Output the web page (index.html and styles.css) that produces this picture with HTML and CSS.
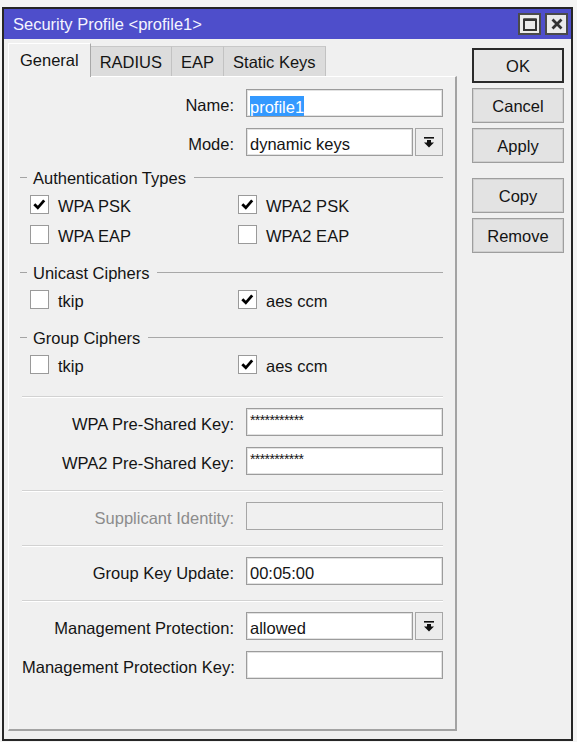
FILE: index.html
```html
<!DOCTYPE html>
<html>
<head>
<meta charset="utf-8">
<link rel="stylesheet" href="styles.css">
</head>
<body>
<div class="window">
  <div class="titlebar">
    <span class="title">Security Profile &lt;profile1&gt;</span>
    <div class="tb-btns">
      <span class="tb-btn"><svg width="14" height="13" viewBox="0 0 14 13"><rect x="1" y="1.5" width="12" height="10.5" fill="none" stroke="#333" stroke-width="2"/><rect x="1" y="0.5" width="12" height="2.5" fill="#333"/></svg></span>
      <span class="tb-btn"><svg width="12" height="12" viewBox="0 0 12 12"><path d="M1.5 1.5 L10.5 10.5 M10.5 1.5 L1.5 10.5" stroke="#333" stroke-width="2.8" fill="none"/></svg></span>
    </div>
  </div>
  <div class="body">
    <div class="left">
      <div class="tabs">
        <div class="tab active">General</div>
        <div class="tab">RADIUS</div>
        <div class="tab">EAP</div>
        <div class="tab">Static Keys</div>
      </div>
      <div class="panel">
        <div class="row">
          <span class="lbl">Name:</span>
          <span class="field"><span class="sel">profile1</span></span>
        </div>
        <div class="row gap">
          <span class="lbl">Mode:</span>
          <span class="field">dynamic keys</span>
          <span class="dd"><svg width="10" height="11" viewBox="0 0 10 11"><rect x="0" y="0" width="10" height="1.6" fill="#111"/><rect x="3" y="3" width="4" height="3" fill="#111"/><polygon points="0,5.5 10,5.5 5,10.5" fill="#111"/></svg></span>
        </div>

        <div class="group"><span class="t">Authentication Types</span></div>
        <div class="checks">
          <label class="cb"><span class="box"><svg width="17" height="17" viewBox="0 0 17 17"><path d="M3.3 8.3 L6.8 11.8 L13.2 4.3" stroke="#000" stroke-width="2.8" fill="none"/></svg></span><span class="t">WPA PSK</span></label>
          <label class="cb"><span class="box"><svg width="17" height="17" viewBox="0 0 17 17"><path d="M3.3 8.3 L6.8 11.8 L13.2 4.3" stroke="#000" stroke-width="2.8" fill="none"/></svg></span><span class="t">WPA2 PSK</span></label>
          <label class="cb"><span class="box"></span><span class="t">WPA EAP</span></label>
          <label class="cb"><span class="box"></span><span class="t">WPA2 EAP</span></label>
        </div>

        <div class="group"><span class="t">Unicast Ciphers</span></div>
        <div class="checks">
          <label class="cb"><span class="box"></span><span class="t">tkip</span></label>
          <label class="cb"><span class="box"><svg width="17" height="17" viewBox="0 0 17 17"><path d="M3.3 8.3 L6.8 11.8 L13.2 4.3" stroke="#000" stroke-width="2.8" fill="none"/></svg></span><span class="t">aes ccm</span></label>
        </div>

        <div class="group"><span class="t">Group Ciphers</span></div>
        <div class="checks">
          <label class="cb"><span class="box"></span><span class="t">tkip</span></label>
          <label class="cb"><span class="box"><svg width="17" height="17" viewBox="0 0 17 17"><path d="M3.3 8.3 L6.8 11.8 L13.2 4.3" stroke="#000" stroke-width="2.8" fill="none"/></svg></span><span class="t">aes ccm</span></label>
        </div>

        <div class="sep first"></div>
        <div class="row">
          <span class="lbl">WPA Pre-Shared Key:</span>
          <span class="field pw">***********</span>
        </div>
        <div class="row gap">
          <span class="lbl">WPA2 Pre-Shared Key:</span>
          <span class="field pw">***********</span>
        </div>

        <div class="sep"></div>
        <div class="row">
          <span class="lbl disabled">Supplicant Identity:</span>
          <span class="field off"></span>
        </div>

        <div class="sep"></div>
        <div class="row">
          <span class="lbl">Group Key Update:</span>
          <span class="field">00:05:00</span>
        </div>

        <div class="sep"></div>
        <div class="row">
          <span class="lbl">Management Protection:</span>
          <span class="field">allowed</span>
          <span class="dd"><svg width="10" height="11" viewBox="0 0 10 11"><rect x="0" y="0" width="10" height="1.6" fill="#111"/><rect x="3" y="3" width="4" height="3" fill="#111"/><polygon points="0,5.5 10,5.5 5,10.5" fill="#111"/></svg></span>
        </div>
        <div class="row gap">
          <span class="lbl">Management Protection Key:</span>
          <span class="field"></span>
        </div>
      </div>
    </div>
    <div class="buttons">
      <button class="btn default">OK</button>
      <button class="btn">Cancel</button>
      <button class="btn">Apply</button>
      <button class="btn spaced">Copy</button>
      <button class="btn">Remove</button>
    </div>
  </div>
</div>
</body>
</html>
```
FILE: styles.css
```css
html, body {
  margin: 0;
  padding: 0;
}
body {
  width: 577px;
  height: 742px;
  overflow: hidden;
  background: #f4f4f4;
  font-family: "Liberation Sans", Arial, sans-serif;
  font-size: 16.5px;
  color: #141414;
}
.window {
  margin: 7px 0 0 2px;
  width: 571px;
  height: 734px;
  box-sizing: border-box;
  border: 2px solid #262626;
  background: #f0f0f0;
  display: flex;
  flex-direction: column;
}
.titlebar {
  height: 30px;
  flex: none;
  background: #4e4ecb;
  display: flex;
  align-items: center;
  justify-content: space-between;
  padding: 0 3px 0 9px;
}
.title {
  color: #f4f4ff;
  font-size: 16.5px;
}
.tb-btns {
  display: flex;
  gap: 4px;
}
.tb-btn {
  width: 23px;
  height: 22px;
  box-sizing: border-box;
  border: 2px solid #4a4a4a;
  background: #ebebeb;
  display: flex;
  align-items: center;
  justify-content: center;
}
.body {
  flex: 1;
  display: flex;
  gap: 15px;
  padding: 4px 7px 8px 4px;
}
.left {
  width: 449px;
  flex: none;
  display: flex;
  flex-direction: column;
}
.tabs {
  display: flex;
  align-items: flex-end;
  height: 34px;
  margin-bottom: -1px;
  position: relative;
  z-index: 1;
}
.tab {
  height: 30px;
  box-sizing: border-box;
  padding: 0 9px;
  line-height: 31px;
  background: #dcdcdc;
  border-top: 1px solid #c8c8c8;
  border-right: 1px solid #c2c2c2;
  margin-bottom: 1px;
}
.tab.active {
  height: 34px;
  line-height: 33px;
  padding: 0 11px;
  background: #f0f0f0;
  border-top: 1px solid #ffffff;
  border-left: 1px solid #ffffff;
  border-right: 1px solid #a8a8a8;
  margin-bottom: 0;
}
.panel {
  flex: 1;
  border-top: 1px solid #ffffff;
  border-left: 1px solid #ffffff;
  border-right: 2px solid #a3a3a3;
  border-bottom: 2px solid #a3a3a3;
  padding: 12px 12px 0 13px;
}
.row {
  display: flex;
  align-items: center;
  height: 28px;
}
.row.gap {
  margin-top: 11px;
}
.lbl {
  width: 212px;
  flex: none;
  margin-right: 12px;
  padding-top: 4px;
  text-align: right;
  white-space: nowrap;
}
.lbl.disabled {
  color: #8c8c8c;
}
.t {
  padding-top: 4px;
}
.field {
  flex: 1;
  height: 28px;
  box-sizing: border-box;
  border: 1px solid #9c9c9c;
  box-shadow: inset 0 0 0 1px #e2e2e2;
  background: #ffffff;
  padding: 2px 3px 0;
  line-height: 26px;
  white-space: nowrap;
  overflow: hidden;
}
.field.off {
  background: #f0f0f0;
  box-shadow: none;
  border-color: #a6a6a6;
}
.field.pw {
  font-size: 14px;
  line-height: 20px;
  padding-top: 1px;
  letter-spacing: -0.6px;
}
.sel {
  display: inline-block;
  background: #3399ff;
  color: #ffffff;
  line-height: 21px;
  padding-top: 1px;
  vertical-align: middle;
}
.dd {
  width: 28px;
  height: 28px;
  flex: none;
  margin-left: 2px;
  box-sizing: border-box;
  border: 1px solid #a6a6a6;
  background: #ececec;
  display: flex;
  align-items: center;
  justify-content: center;
}
.group {
  display: flex;
  align-items: center;
  height: 20px;
  margin-top: 11px;
}
.group::before {
  content: "";
  width: 7px;
  height: 1px;
  background: #a4a4a4;
  margin-left: -2px;
  margin-right: 6px;
}
.group::after {
  content: "";
  flex: 1;
  height: 1px;
  background: #a8a8a8;
  margin-left: 8px;
}
.group .t {
  padding-top: 2px;
}
.checks + .group {
  margin-top: 13px;
}
.checks {
  display: grid;
  grid-template-columns: 208px 1fr;
  padding-left: 8px;
  margin-top: 2px;
}
.cb {
  display: flex;
  align-items: center;
  gap: 9px;
  height: 30px;
}
.box {
  width: 19px;
  height: 19px;
  box-sizing: border-box;
  border: 1px solid #9a9a9a;
  background: #ffffff;
  display: flex;
  align-items: center;
  justify-content: center;
}
.sep {
  height: 1px;
  background: #d2d2d2;
  border-bottom: 1px solid #ffffff;
  margin: 15px 0 10px;
}
.sep.first {
  margin-top: 17px;
}
.buttons {
  width: 92px;
  flex: none;
  display: flex;
  flex-direction: column;
  gap: 5px;
  padding-top: 5px;
}
.btn {
  height: 35px;
  box-sizing: border-box;
  border: 1px solid #9e9e9e;
  box-shadow: inset 0 0 0 1px #cfcfcf;
  background: #e3e3e3;
  font-family: "Liberation Sans", Arial, sans-serif;
  font-size: 16.5px;
  color: #141414;
  padding: 2px 0 0;
}
.btn.default {
  border: 2px solid #2a2a2a;
  box-shadow: none;
  background: #e6e6e6;
}
.btn.spaced {
  margin-top: 10px;
}
```
